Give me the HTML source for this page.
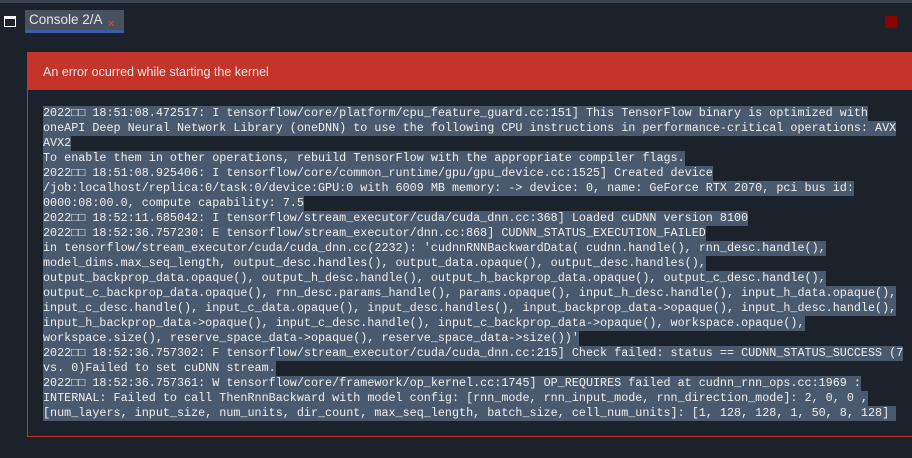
<!DOCTYPE html>
<html><head><meta charset="utf-8"><style>
body{margin:0;width:912px;height:458px;background:#1b222c;overflow:hidden;position:relative;font-family:"Liberation Sans",sans-serif}
.top{position:absolute;left:0;top:0;width:912px;height:3px;background:#3a4450}
.tab{position:absolute;left:25px;top:10px;width:99px;height:20px;background:#48525f;color:#e6e6e6;font-size:13.5px;line-height:19px}
.tab span{position:absolute;left:4px;top:0}
.tab i{position:absolute;top:5px;color:#c25060;font-style:normal;font-size:10px;left:82px}
.tabu{position:absolute;left:25px;top:30px;width:99px;height:3px;background:#3f5aa8}
.win{position:absolute;left:4px;top:16px;width:10px;height:7px;border:1px solid #fff;border-top:3px solid #fff}
.sq{position:absolute;left:885px;top:16px;width:12px;height:12px;background:#8b0000}
.panel{position:absolute;left:27px;top:52px;width:900px;height:384px;border-left:1px solid #c4342a;border-bottom:1px solid #c4342a}
.hdr{position:absolute;left:0;top:0;width:900px;height:38px;background:#c4342a;color:#f2e6e4;font-size:12.5px;line-height:40px;padding-left:15px;box-sizing:border-box}
.out{position:absolute;left:43px;top:106px;font-family:"Liberation Mono",monospace;font-size:11.75px;line-height:15px;color:#eeeeee}
.out div{height:15px;white-space:pre}
.out span{background:#4a5a6e;display:inline-block;height:15px;line-height:15px;vertical-align:top}
</style></head><body>
<div class="top"></div>
<div class="win"></div>
<div class="tab"><span>Console 2/A</span><i>✕</i></div>
<div class="tabu"></div>
<div class="sq"></div>
<div class="panel"><div class="hdr">An error ocurred while starting the kernel</div></div>
<div class="out"><div><span>2022□□ 18:51:08.472517: I tensorflow/core/platform/cpu_feature_guard.cc:151] This TensorFlow binary is optimized with</span></div><div><span>oneAPI Deep Neural Network Library (oneDNN) to use the following CPU instructions in performance-critical operations: AVX</span></div><div><span>AVX2</span></div><div><span>To enable them in other operations, rebuild TensorFlow with the appropriate compiler flags.</span></div><div><span>2022□□ 18:51:08.925406: I tensorflow/core/common_runtime/gpu/gpu_device.cc:1525] Created device</span></div><div><span>/job:localhost/replica:0/task:0/device:GPU:0 with 6009 MB memory: -> device: 0, name: GeForce RTX 2070, pci bus id:</span></div><div><span>0000:08:00.0, compute capability: 7.5</span></div><div><span>2022□□ 18:52:11.685042: I tensorflow/stream_executor/cuda/cuda_dnn.cc:368] Loaded cuDNN version 8100</span></div><div><span>2022□□ 18:52:36.757230: E tensorflow/stream_executor/dnn.cc:868] CUDNN_STATUS_EXECUTION_FAILED</span></div><div><span>in tensorflow/stream_executor/cuda/cuda_dnn.cc(2232): 'cudnnRNNBackwardData( cudnn.handle(), rnn_desc.handle(),</span></div><div><span>model_dims.max_seq_length, output_desc.handles(), output_data.opaque(), output_desc.handles(),</span></div><div><span>output_backprop_data.opaque(), output_h_desc.handle(), output_h_backprop_data.opaque(), output_c_desc.handle(),</span></div><div><span>output_c_backprop_data.opaque(), rnn_desc.params_handle(), params.opaque(), input_h_desc.handle(), input_h_data.opaque(),</span></div><div><span>input_c_desc.handle(), input_c_data.opaque(), input_desc.handles(), input_backprop_data->opaque(), input_h_desc.handle(),</span></div><div><span>input_h_backprop_data->opaque(), input_c_desc.handle(), input_c_backprop_data->opaque(), workspace.opaque(),</span></div><div><span>workspace.size(), reserve_space_data->opaque(), reserve_space_data->size())'</span></div><div><span>2022□□ 18:52:36.757302: F tensorflow/stream_executor/cuda/cuda_dnn.cc:215] Check failed: status == CUDNN_STATUS_SUCCESS (7</span></div><div><span>vs. 0)Failed to set cuDNN stream.</span></div><div><span>2022□□ 18:52:36.757361: W tensorflow/core/framework/op_kernel.cc:1745] OP_REQUIRES failed at cudnn_rnn_ops.cc:1969 :</span></div><div><span>INTERNAL: Failed to call ThenRnnBackward with model config: [rnn_mode, rnn_input_mode, rnn_direction_mode]: 2, 0, 0 ,</span></div><div><span>[num_layers, input_size, num_units, dir_count, max_seq_length, batch_size, cell_num_units]: [1, 128, 128, 1, 50, 8, 128] </span></div></div>
</body></html>
